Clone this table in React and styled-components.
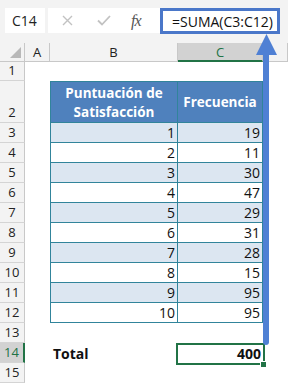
import React from "react";
import styled, { createGlobalStyle, css } from "styled-components";

const Global = createGlobalStyle`
  html, body { margin: 0; padding: 0; background: #fff; }
  body { width: 288px; height: 386px; overflow: hidden; }
`;

const BLUE = "#4f81bd";
const LINE = "#31849b";
const GREEN = "#217346";

const Frame = styled.div`
  position: relative;
  width: 288px;
  height: 386px;
  overflow: hidden;
  background: #fff;
  font-family: "Open Sans", "Liberation Sans", sans-serif;
`;

const FormulaBar = styled.div`
  display: flex;
  align-items: flex-start;
  height: 43px;
  box-sizing: border-box;
  padding: 8px 0 0 5px;
  background: #f3f3f3;
`;

const NameBox = styled.div`
  width: 40px;
  height: 25px;
  box-sizing: border-box;
  padding-left: 7px;
  display: flex;
  align-items: center;
  background: #fff;
  color: #222;
  font-size: 14px;
`;

const ToolBox = styled.div`
  width: 112px;
  height: 25px;
  margin-left: 3px;
  display: flex;
  align-items: center;
  background: #fff;
`;

const Icon = styled.span`
  display: flex;
  margin-left: ${p => p.$gap}px;
`;

const Fx = styled.span`
  margin-left: ${p => p.$gap}px;
  font-family: "Liberation Serif", serif;
  font-style: italic;
  font-size: 16px;
  color: #555;
  letter-spacing: -1px;
`;

const FormulaBox = styled.div`
  width: 120px;
  height: 26px;
  box-sizing: border-box;
  border: 3px solid #4a77c9;
  background: #fff;
  display: flex;
  align-items: center;
  padding-left: 9px;
  font-size: 14px;
  color: #111;
`;

const Sheet = styled.div`
  display: grid;
  grid-template-columns: 25px 25px 128px 85px 1fr;
  grid-template-rows: 19px 19px 42px repeat(13, 20px);
`;

const Corner = styled.div`
  position: relative;
  background: #f3f3f3;
  border-right: 1px solid #c8c8c8;
  border-bottom: 1px solid #c8c8c8;
  &::after {
    content: "";
    position: absolute;
    right: 3px;
    bottom: 3px;
    border-left: 11px solid transparent;
    border-bottom: 11px solid #b8b8b8;
  }
`;

const ColHead = styled.div`
  box-sizing: border-box;
  display: flex;
  align-items: center;
  justify-content: center;
  font-size: 13px;
  background: ${p => (p.$active ? "#d2d2d2" : "#f3f3f3")};
  color: ${p => (p.$active ? GREEN : "#222")};
  border-right: 1px solid #c8c8c8;
  border-bottom: ${p => (p.$active ? `2px solid ${GREEN}` : "1px solid #c8c8c8")};
`;

const RowHead = styled.div`
  box-sizing: border-box;
  display: flex;
  align-items: flex-end;
  justify-content: center;
  padding-bottom: 1px;
  font-size: 13px;
  background: ${p => (p.$active ? "#d2d2d2" : "#f3f3f3")};
  color: ${p => (p.$active ? GREEN : "#222")};
  border-bottom: 1px solid #d4d4d4;
  border-right: ${p => (p.$active ? `2px solid ${GREEN}` : "1px solid #c8c8c8")};
`;

const Blank = styled.div`
  background: #fff;
`;

const TableCell = styled.div`
  box-sizing: border-box;
  display: flex;
  border-right: 1px solid ${LINE};
  border-bottom: 1px solid ${LINE};
  ${p => p.$first && css`border-left: 1px solid ${LINE};`}
  ${p =>
    p.$head
      ? css`
          border-top: 1px solid ${LINE};
          background: ${BLUE};
          color: #fff;
          font-weight: 700;
          font-size: 13.5px;
          line-height: 19px;
          text-align: center;
          align-items: center;
          justify-content: center;
          padding-top: 1px;
        `
      : css`
          background: ${p.$band ? "#dce6f1" : "#fff"};
          color: #111;
          font-size: 14px;
          align-items: flex-end;
          justify-content: flex-end;
          padding: 0 2px 0 0;
        `}
`;

const Label = styled.div`
  display: flex;
  align-items: center;
  padding-left: 3px;
  font-weight: 700;
  font-size: 14px;
  color: #111;
`;

const TotalCell = styled.div`
  position: relative;
  display: flex;
  align-items: center;
  justify-content: flex-end;
  padding-right: 2px;
  font-weight: 700;
  font-size: 14px;
  color: #111;
  &::before {
    content: "";
    position: absolute;
    left: -2px;
    top: 0;
    right: -2px;
    bottom: -2px;
    border: 2px solid ${GREEN};
  }
  &::after {
    content: "";
    position: absolute;
    right: -4px;
    bottom: -5px;
    width: 5px;
    height: 5px;
    background: ${GREEN};
    border: 1px solid #fff;
  }
`;

const Arrow = styled.svg`
  position: absolute;
  left: 0;
  top: 0;
  pointer-events: none;
`;

const values = [19, 11, 30, 47, 29, 31, 28, 15, 95, 95];

export default function App() {
  const rows = [];
  for (let r = 1; r <= 15; r++) {
    const cells = [<RowHead key="h" $active={r === 14}>{r}</RowHead>, <Blank key="a" />];
    if (r === 2) {
      cells.push(
        <TableCell key="b" $head $first>Puntuación de<br />Satisfacción</TableCell>,
        <TableCell key="c" $head>Frecuencia</TableCell>
      );
    } else if (r >= 3 && r <= 12) {
      const band = r % 2 === 1;
      cells.push(
        <TableCell key="b" $first $band={band}>{r - 2}</TableCell>,
        <TableCell key="c" $band={band}>{values[r - 3]}</TableCell>
      );
    } else if (r === 14) {
      cells.push(<Label key="b">Total</Label>, <TotalCell key="c">400</TotalCell>);
    } else {
      cells.push(<Blank key="b" />, <Blank key="c" />);
    }
    cells.push(<Blank key="d" />);
    rows.push(<React.Fragment key={r}>{cells}</React.Fragment>);
  }

  return (
    <Frame>
      <Global />
      <FormulaBar>
        <NameBox>C14</NameBox>
        <ToolBox>
          <Icon $gap={14}>
            <svg width="11" height="11" viewBox="0 0 11 11">
              <path d="M1 1L10 10M10 1L1 10" stroke="#c2c2c2" strokeWidth="1.4" />
            </svg>
          </Icon>
          <Icon $gap={24}>
            <svg width="14" height="11" viewBox="0 0 14 11">
              <path d="M1 5.5L5 9.5L13 1" stroke="#c2c2c2" strokeWidth="1.8" fill="none" />
            </svg>
          </Icon>
          <Fx $gap={20}>fx</Fx>
        </ToolBox>
        <FormulaBox>=SUMA(C3:C12)</FormulaBox>
      </FormulaBar>
      <Sheet>
        <Corner />
        <ColHead>A</ColHead>
        <ColHead>B</ColHead>
        <ColHead $active>C</ColHead>
        <ColHead />
        {rows}
      </Sheet>
      <Arrow width="288" height="386" viewBox="0 0 288 386">
        <path d="M263 52H269V342Q269 345 266 345Q263 345 263 342Z" fill="#4f80d4" />
        <path d="M266.5 34L277 55H256Z" fill="#4f80d4" />
      </Arrow>
    </Frame>
  );
}
